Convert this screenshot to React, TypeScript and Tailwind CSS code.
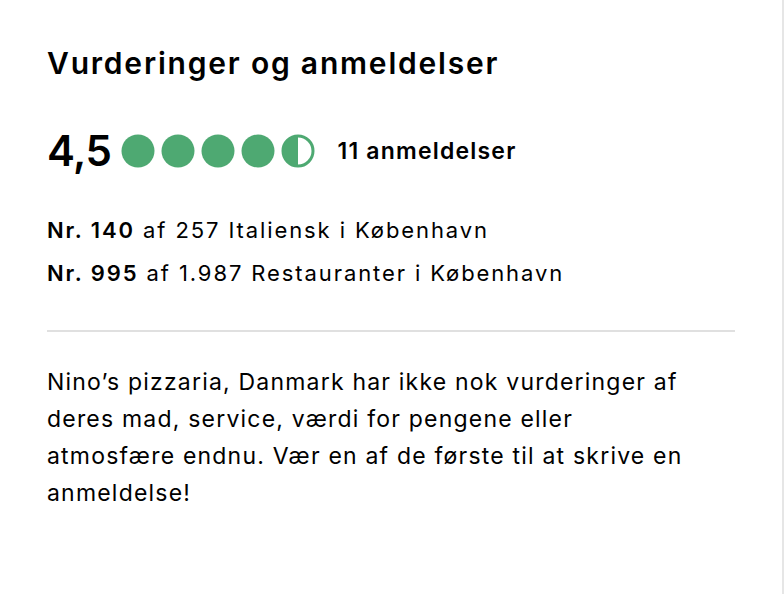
import React from 'react'

const rankings = [
  { rank: 'Nr. 140', rest: 'af 257 Italiensk i København' },
  { rank: 'Nr. 995', rest: 'af 1.987 Restauranter i København' },
]

function Bubble({ half = false }: { half?: boolean }) {
  return (
    <svg width="34" height="34" viewBox="0 0 34 34" className="shrink-0">
      {half ? (
        <>
          <circle cx="17" cy="17" r="15" fill="none" stroke="#4ea972" strokeWidth="3" />
          <path d="M17 2 A15 15 0 0 0 17 32 Z" fill="#4ea972" />
        </>
      ) : (
        <circle cx="17" cy="17" r="16.5" fill="#4ea972" />
      )}
    </svg>
  )
}

export default function App() {
  return (
    <div
      className="min-h-[594px] w-full bg-white border-r-2 border-[#e6e6e6] text-[#000] px-[47px] pt-[44px]"
      style={{ fontFamily: 'Inter, "Noto Sans", sans-serif' }}
    >
      <h2 className="text-[30px] leading-[38px] font-semibold tracking-[1.8px]">
        Vurderinger og anmeldelser
      </h2>

      <div className="flex items-center mt-[44px] h-[50px]">
        <span className="text-[42px] leading-[50px] font-semibold tracking-[-0.5px] mr-[10px]">4,5</span>
        <div className="flex gap-[6px]">
          <Bubble />
          <Bubble />
          <Bubble />
          <Bubble />
          <Bubble half />
        </div>
        <span className="ml-[22px] text-[23px] font-semibold tracking-[1.2px]">11 anmeldelser</span>
      </div>

      <div className="mt-[40px] flex flex-col gap-[14px]">
        {rankings.map((r) => (
          <p key={r.rank} className="text-[22px] leading-[29px] tracking-[1.9px]">
            <span className="font-semibold">{r.rank}</span> {r.rest}
          </p>
        ))}
      </div>

      <div className="mt-[42px] h-[2px] bg-[#e0e0e0]" />

      <p className="mt-[32px] text-[23px] leading-[37px] tracking-[1.2px]">
        Nino’s pizzaria, Danmark har ikke nok vurderinger af
        <br />
        deres mad, service, værdi for pengene eller
        <br />
        atmosfære endnu. Vær en af de første til at skrive en
        <br />
        anmeldelse!
      </p>
    </div>
  )
}
